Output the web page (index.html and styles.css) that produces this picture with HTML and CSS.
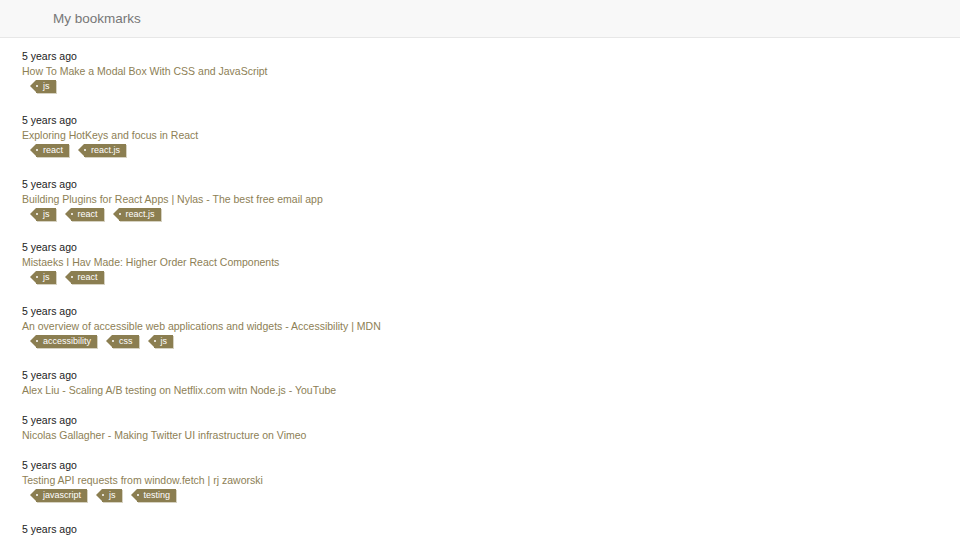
FILE: index.html
```html
<!DOCTYPE html>
<html lang="en">
<head>
    <meta charset="UTF-8">
    <meta name="viewport" content="width=device-width, initial-scale=1.0">
    <title>My bookmarks</title>
    <link rel="stylesheet" href="styles.css">
</head>
<body>
    <header class="navbar">
        <a class="brand" href="#">My bookmarks</a>
    </header>

    <div class="container">
        <div class="bookmark">
            <div class="date">5 years ago</div>
            <a class="title" href="#">How To Make a Modal Box With CSS and JavaScript</a>
            <div class="tags">
                <span class="tag">js</span>
            </div>
        </div>

        <div class="bookmark">
            <div class="date">5 years ago</div>
            <a class="title" href="#">Exploring HotKeys and focus in React</a>
            <div class="tags">
                <span class="tag">react</span>
                <span class="tag">react.js</span>
            </div>
        </div>

        <div class="bookmark">
            <div class="date">5 years ago</div>
            <a class="title" href="#">Building Plugins for React Apps | Nylas - The best free email app</a>
            <div class="tags">
                <span class="tag">js</span>
                <span class="tag">react</span>
                <span class="tag">react.js</span>
            </div>
        </div>

        <div class="bookmark">
            <div class="date">5 years ago</div>
            <a class="title" href="#">Mistaeks I Hav Made: Higher Order React Components</a>
            <div class="tags">
                <span class="tag">js</span>
                <span class="tag">react</span>
            </div>
        </div>

        <div class="bookmark">
            <div class="date">5 years ago</div>
            <a class="title" href="#">An overview of accessible web applications and widgets - Accessibility | MDN</a>
            <div class="tags">
                <span class="tag">accessibility</span>
                <span class="tag">css</span>
                <span class="tag">js</span>
            </div>
        </div>

        <div class="bookmark">
            <div class="date">5 years ago</div>
            <a class="title" href="#">Alex Liu - Scaling A/B testing on Netflix.com witn Node.js - YouTube</a>
        </div>

        <div class="bookmark">
            <div class="date">5 years ago</div>
            <a class="title" href="#">Nicolas Gallagher - Making Twitter UI infrastructure on Vimeo</a>
        </div>

        <div class="bookmark">
            <div class="date">5 years ago</div>
            <a class="title" href="#">Testing API requests from window.fetch | rj zaworski</a>
            <div class="tags">
                <span class="tag">javascript</span>
                <span class="tag">js</span>
                <span class="tag">testing</span>
            </div>
        </div>

        <div class="bookmark">
            <div class="date">5 years ago</div>
            <a class="title" href="#">Functional JavaScript for everything: the World Swift Mission Productivity</a>
        </div>
    </div>
</body>
</html>
```

FILE: styles.css
```css
body {
    font-family: 'Liberation Sans', Arial, sans-serif;
    font-size: 10.5px;
    margin: 0;
    padding: 0;
    background-color: #fff;
    color: #333;
}
.navbar {
    height: 37px;
    background-color: #f8f8f8;
    border-bottom: 1px solid #e7e7e7;
    display: flex;
    align-items: center;
    padding-left: 53px;
}
.brand {
    font-size: 13.5px;
    color: #777;
    text-decoration: none;
}
.container {
    padding: 11px 22px 0;
}
.bookmark {
    margin-bottom: 15px;
    line-height: 15px;
}
.date {
    color: #222;
}
.title {
    display: block;
    color: #8d8055;
    text-decoration: none;
}
.tags {
    display: flex;
    gap: 15px;
    height: 18.75px;
    box-sizing: border-box;
    padding: 1px 0 0 14px;
    align-items: flex-start;
}
.tag {
    position: relative;
    height: 13px;
    line-height: 13px;
    font-size: 9px;
    color: #fff;
    background-color: #8b7e51;
    padding: 0 6px 0 7px;
    box-shadow: 1px 1px 0 #d6d2c2;
}
.tag::before {
    content: "";
    position: absolute;
    left: -6px;
    top: 0;
    border-style: solid;
    border-width: 6.5px 6px 6.5px 0;
    border-color: transparent #8b7e51 transparent transparent;
}
.tag::after {
    content: "";
    position: absolute;
    left: 0;
    top: 5px;
    width: 2px;
    height: 2px;
    border-radius: 1px;
    background-color: #fff;
}
```
